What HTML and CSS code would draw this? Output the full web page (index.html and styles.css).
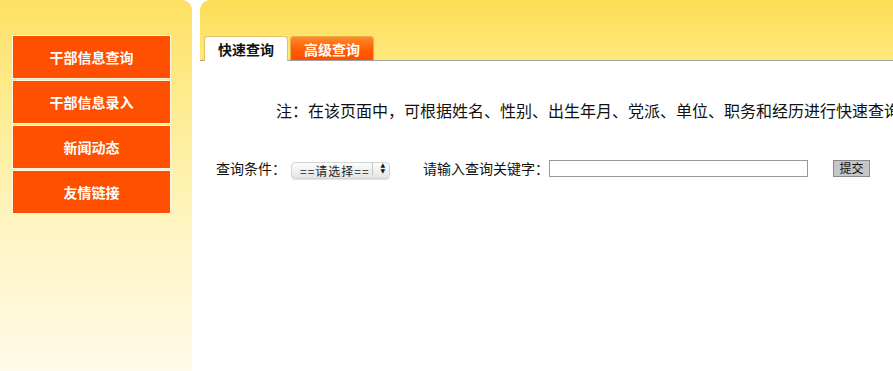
FILE: index.html
```html
<!DOCTYPE html>
<html lang="zh-CN">
<head>
    <meta charset="UTF-8">
    <title>干部信息查询</title>
    <link rel="stylesheet" href="styles.css">
</head>
<body>
    <div class="page">
        <aside class="sidebar">
            <ul class="menu">
                <li><a href="#">干部信息查询</a></li>
                <li><a href="#">干部信息录入</a></li>
                <li><a href="#">新闻动态</a></li>
                <li><a href="#">友情链接</a></li>
            </ul>
        </aside>

        <div class="main">
            <div class="banner">
                <ul class="tabs">
                    <li class="tab tab-active">快速查询</li>
                    <li class="tab">高级查询</li>
                </ul>
            </div>

            <p class="note">注：在该页面中，可根据姓名、性别、出生年月、党派、单位、职务和经历进行快速查询</p>

            <form class="search" id="searchForm">
                <label for="field">查询条件：</label>
                <span class="select-box">
                    <select id="field" name="field">
                        <option>==请选择==</option>
                        <option>姓名</option>
                        <option>性别</option>
                        <option>出生年月</option>
                        <option>党派</option>
                        <option>单位</option>
                        <option>职务</option>
                        <option>经历</option>
                    </select>
                </span>
                <label for="keyword" class="keyword-label">请输入查询关键字：</label>
                <input type="text" id="keyword" name="keyword">
                <button type="submit">提交</button>
            </form>
        </div>
    </div>
</body>
</html>
```

FILE: styles.css
```css
html, body {
    margin: 0;
    height: 100%;
    overflow: hidden;
    background-color: #fff;
    font-family: "Noto Sans CJK SC", "Liberation Sans", sans-serif;
    color: #111;
}
.page {
    display: flex;
    height: 100%;
}
.sidebar {
    width: 192px;
    flex-shrink: 0;
    padding-top: 35px;
    box-sizing: border-box;
    background: linear-gradient(#fde064 0%, #fdeb8c 25%, #fff4c0 60%, #fffaea 100%);
    border-top-right-radius: 10px;
}
.menu {
    list-style: none;
    margin: 0 0 0 12px;
    padding: 0;
    width: 159px;
}
.menu li {
    margin-bottom: 1px;
}
.menu a {
    display: flex;
    align-items: center;
    justify-content: center;
    height: 42px;
    border: 1px solid #fff6dc;
    background-color: #fe5000;
    color: #fff;
    font-size: 14px;
    font-weight: bold;
    text-decoration: none;
}
.main {
    flex: 1;
    margin-left: 8px;
    min-width: 0;
}
.banner {
    height: 60px;
    display: flex;
    align-items: flex-end;
    padding-left: 4px;
    background: linear-gradient(#fddc56, #fde97c);
    border-top-left-radius: 10px;
    border-bottom: 1px solid #a0a0a0;
}
.tabs {
    list-style: none;
    display: flex;
    gap: 2px;
    margin: 0 0 -1px 0;
    padding: 0;
}
.tab {
    width: 82px;
    height: 23px;
    line-height: 24px;
    text-align: center;
    font-size: 14px;
    font-weight: bold;
    color: #fff;
    border: 1px solid #eeaa44;
    border-bottom: none;
    border-radius: 4px 4px 0 0;
    background: linear-gradient(#ff8a2a, #ff5a00 60%, #fe5000);
}
.tab-active {
    color: #111;
    font-weight: 600;
    background: #fff;
    border-color: #e9bf63;
    height: 24px;
}
.note {
    margin: 38px 0 0 76px;
    font-size: 16px;
    line-height: 22px;
    white-space: nowrap;
}
.search {
    display: flex;
    align-items: center;
    margin: 37px 0 0 16px;
    font-size: 14px;
    white-space: nowrap;
}
.search label {
    margin-right: 5px;
}
.select-box {
    position: relative;
    display: inline-block;
    width: 99px;
    height: 17px;
}
.select-box select {
    -webkit-appearance: none;
    appearance: none;
    width: 100%;
    height: 17px;
    margin: 0;
    padding: 0 18px 0 8px;
    border: 1px solid #d4d4d4;
    border-radius: 4px;
    background: linear-gradient(#fdfdfd, #e4e4e4);
    font-family: inherit;
    font-size: 12px;
    letter-spacing: 1px;
    line-height: 15px;
    color: #222;
    box-shadow: 0 1px 1px rgba(0, 0, 0, 0.12);
}
.select-box::after {
    content: "";
    position: absolute;
    top: 2px;
    right: 17px;
    height: 13px;
    border-left: 1px solid #c4c4c4;
}
.select-box::before {
    content: "▲\A▼";
    white-space: pre;
    position: absolute;
    top: 2px;
    right: 5px;
    font-family: "DejaVu Sans", sans-serif;
    font-size: 6px;
    line-height: 6px;
    color: #111;
    pointer-events: none;
    z-index: 1;
}
.search .keyword-label {
    margin-left: 33px;
    margin-right: 0;
}
.search input {
    width: 255px;
    height: 15px;
    margin: 0;
    padding: 0 1px;
    border: 1px solid #999;
    font-size: 12px;
}
.search button {
    margin-left: 25px;
    height: 17px;
    width: 37px;
    padding: 0;
    border: 1px solid #8a8a8a;
    background-color: #c6c6c6;
    font-family: inherit;
    font-size: 12px;
    line-height: 14px;
    color: #111;
}
```
